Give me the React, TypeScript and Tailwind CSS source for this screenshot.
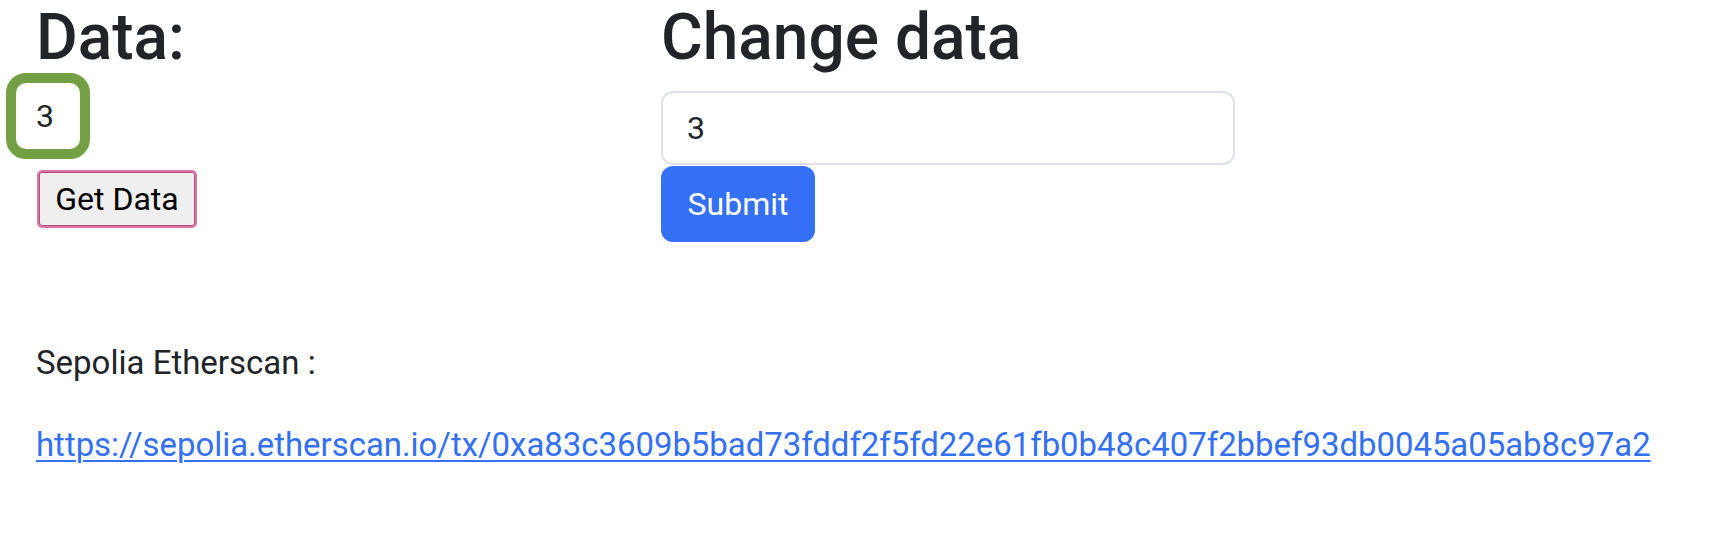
const App = () => {
  return (
    <main className="min-h-[560px] bg-white px-[36px] font-['Roboto','Liberation_Sans',sans-serif] text-[#212529]">
      <div className="flex">
        <div className="w-[625px] shrink-0">
          <h1 className="text-[64px] font-medium leading-[75px]">Data:</h1>
          <div className="-ml-[30px] -mt-[2px] flex h-[86px] w-[84px] items-center rounded-[20px] border-[10px] border-[#73a045] pl-[20px] text-[32px]">
            3
          </div>
          <button className="ml-[1px] mt-[11px] flex h-[58px] w-[160px] items-center justify-center rounded-[5px] border-2 border-[#dc76a6] bg-[#efefef] text-[32px] text-black shadow-[inset_0_0_0_1px_#b04c7c]">
            Get Data
          </button>
        </div>
        <div className="flex flex-col">
          <h1 className="text-[64px] font-medium leading-[75px]">Change data</h1>
          <input
            className="mt-[16px] h-[74px] w-[574px] rounded-[12px] border-2 border-[#dee2e6] px-[24px] text-[32px] text-[#212529] outline-none"
            defaultValue="3"
          />
          <button className="mt-[1px] h-[76px] w-[154px] rounded-[12px] bg-[#3470f4] text-[32px] text-white">
            Submit
          </button>
        </div>
      </div>
      <div className="mt-[96px] text-[33px] leading-[49.5px]">
        <p>Sepolia Etherscan :</p>
        <p className="mt-[32px] text-[32.9px]">
          <a
            href="#"
            className="text-[#3470f4] underline decoration-2 underline-offset-[4px]"
          >
            https://sepolia.etherscan.io/tx/0xa83c3609b5bad73fddf2f5fd22e61fb0b48c407f2bbef93db0045a05ab8c97a2
          </a>
        </p>
      </div>
    </main>
  );
};
export default App;
